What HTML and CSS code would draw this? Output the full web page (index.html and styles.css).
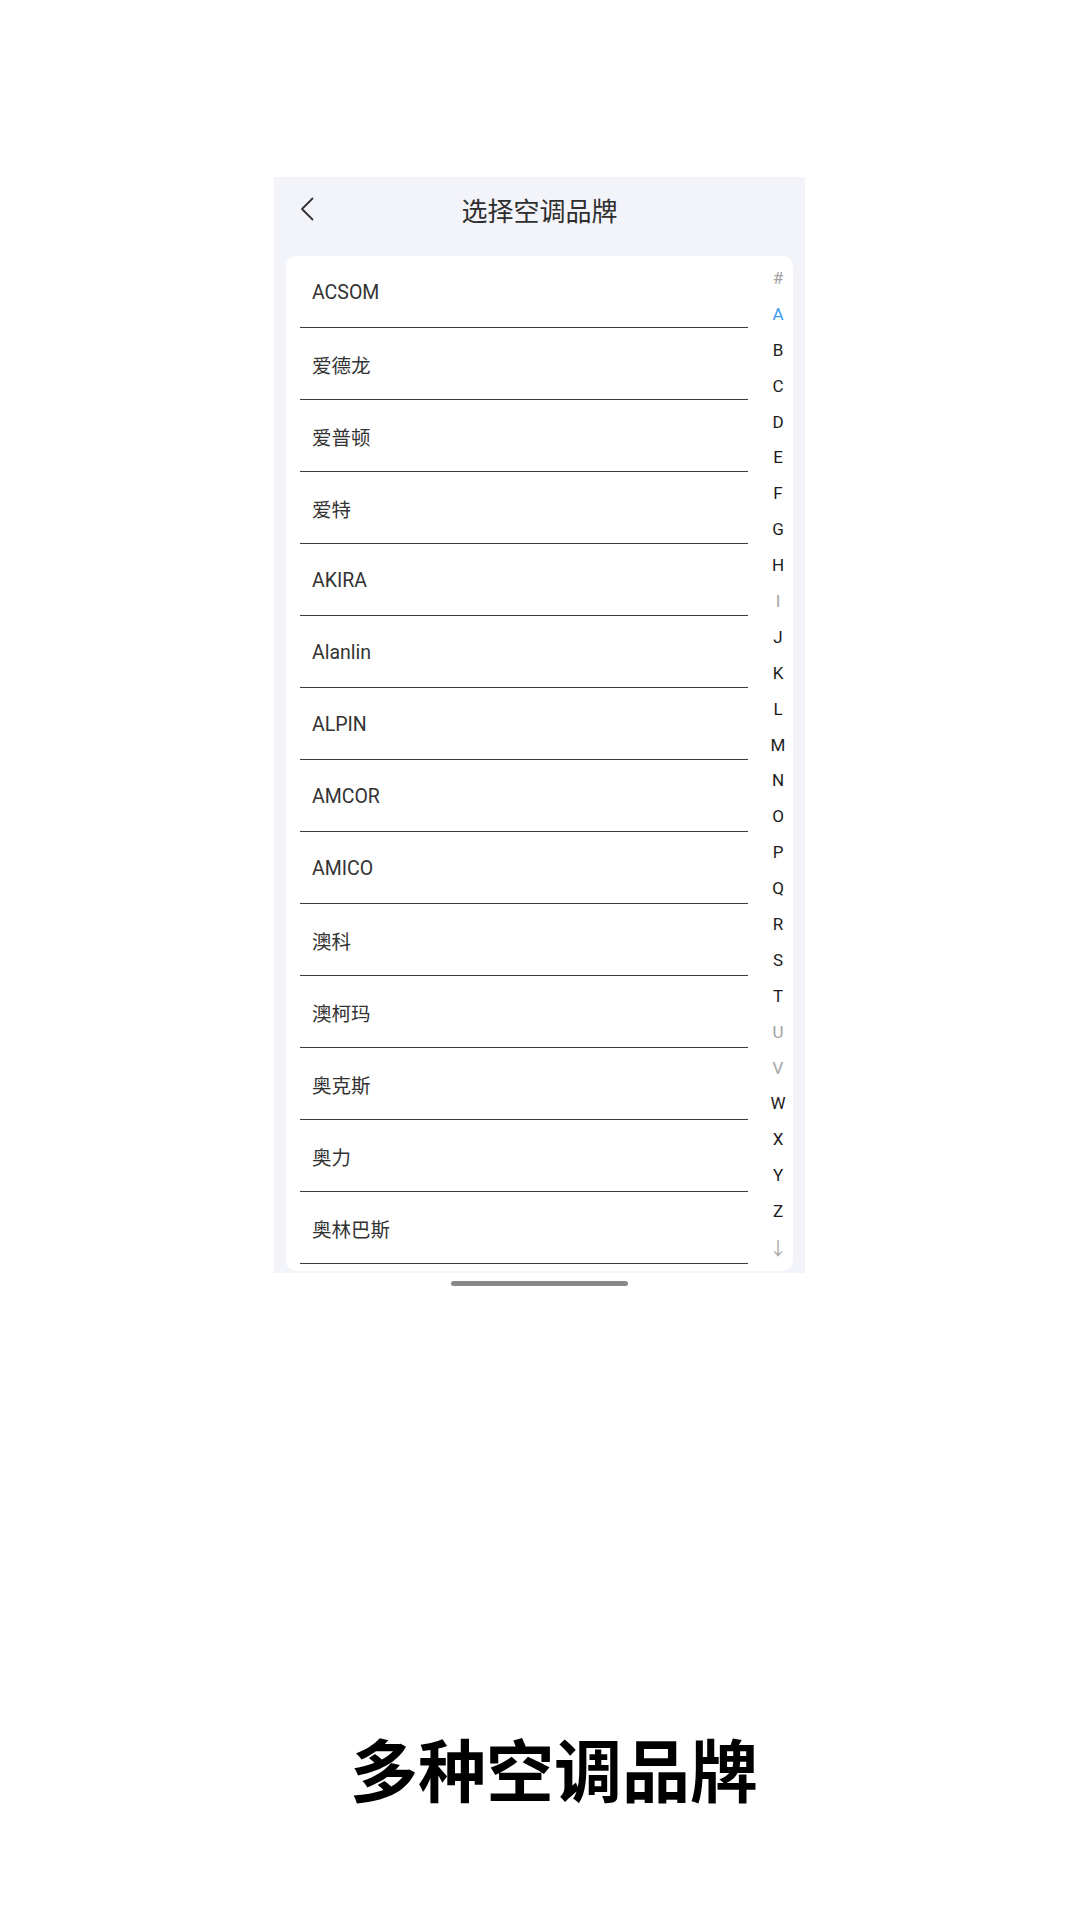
FILE: index.html
```html
<!DOCTYPE html>
<html lang="zh-CN">
<head>
<meta charset="utf-8">
<title>选择空调品牌</title>
<link rel="stylesheet" href="styles.css">
</head>
<body>
<div class="device">
  <div class="screen">
    <header class="topbar">
      <button class="back" aria-label="返回">
        <svg width="14" height="24" viewBox="0 0 14 24"><polyline points="12.5,1.5 2,12 12.5,22.5" fill="none" stroke="#333" stroke-width="1.8" stroke-linecap="round" stroke-linejoin="round"/></svg>
      </button>
      <h1 class="title">选择空调品牌</h1>
      <span></span>
    </header>
    <section class="card">
      <ul class="brand-list">
        <li>ACSOM</li>
        <li>爱德龙</li>
        <li>爱普顿</li>
        <li>爱特</li>
        <li>AKIRA</li>
        <li>Alanlin</li>
        <li>ALPIN</li>
        <li>AMCOR</li>
        <li>AMICO</li>
        <li>澳科</li>
        <li>澳柯玛</li>
        <li>奥克斯</li>
        <li>奥力</li>
        <li>奥林巴斯</li>
      </ul>
      <ol class="index">
        <li class="off">#</li>
        <li class="on">A</li>
        <li>B</li>
        <li>C</li>
        <li>D</li>
        <li>E</li>
        <li>F</li>
        <li>G</li>
        <li>H</li>
        <li class="off">I</li>
        <li>J</li>
        <li>K</li>
        <li>L</li>
        <li>M</li>
        <li>N</li>
        <li>O</li>
        <li>P</li>
        <li>Q</li>
        <li>R</li>
        <li>S</li>
        <li>T</li>
        <li class="off">U</li>
        <li class="off">V</li>
        <li>W</li>
        <li>X</li>
        <li>Y</li>
        <li>Z</li>
        <li class="off arrow">↓</li>
      </ol>
    </section>
  </div>
  <div class="home-bar"></div>
</div>
<p class="caption">多种空调品牌</p>
</body>
</html>
```
FILE: styles.css
```css
html, body {
  margin: 0;
  padding: 0;
}

body {
  width: 1080px;
  height: 1920px;
  background: #ffffff;
  font-family: Roboto, "Noto Sans CJK SC", sans-serif;
  overflow: hidden;
}

/* phone frame */
.device {
  margin: 177px 0 0 274px;
  width: 531px;
}

.screen {
  height: 1096px;
  background: #f3f4f9;
  display: flex;
  flex-direction: column;
}

/* navigation bar */
.topbar {
  height: 64px;
  display: grid;
  grid-template-columns: 1fr auto 1fr;
  align-items: center;
}

.back {
  justify-self: start;
  margin-left: 26px;
  padding: 0;
  border: 0;
  background: none;
  display: flex;
}

.title {
  margin: 0;
  font-family: "Noto Sans CJK SC", sans-serif;
  font-weight: 400;
  font-size: 26px;
  color: #2e2e2e;
}

/* brand list card */
.card {
  margin: 15px 12px 0;
  height: 1015px;
  background: #ffffff;
  border-radius: 10px;
  display: flex;
  overflow: hidden;
}

.brand-list {
  list-style: none;
  margin: 0 0 0 14px;
  padding: 0;
  width: 448px;
}

.brand-list li {
  height: 71px;
  border-bottom: 1px solid #3c3c3c;
  display: flex;
  align-items: center;
  padding-left: 12px;
  padding-top: 1px;
  box-sizing: border-box;
  height: 72px;
  font-size: 19.5px;
  color: #333333;
}

/* alphabet index */
.index {
  list-style: none;
  margin: 0 0 0 auto;
  padding: 4px 0 0;
  width: 30px;
}

.index li {
  height: 35.9px;
  display: flex;
  align-items: center;
  justify-content: center;
  font-size: 17px;
  color: #1c1c1c;
}

.index li.off {
  color: #a3a3a3;
}

.index li.on {
  color: #3d9bf2;
}

.index li.arrow {
  font-family: "Noto Sans CJK SC", sans-serif;
  font-size: 18px;
}

.home-bar {
  width: 177px;
  height: 5px;
  margin: 8px auto 0;
  border-radius: 3px;
  background: #898989;
}

/* promo caption */
.caption {
  margin: 448px 0 0;
  padding-left: 28px;
  text-align: center;
  font-family: "Noto Sans CJK SC", sans-serif;
  font-weight: 700;
  font-size: 68px;
  line-height: 68px;
  color: #000000;
}
```
